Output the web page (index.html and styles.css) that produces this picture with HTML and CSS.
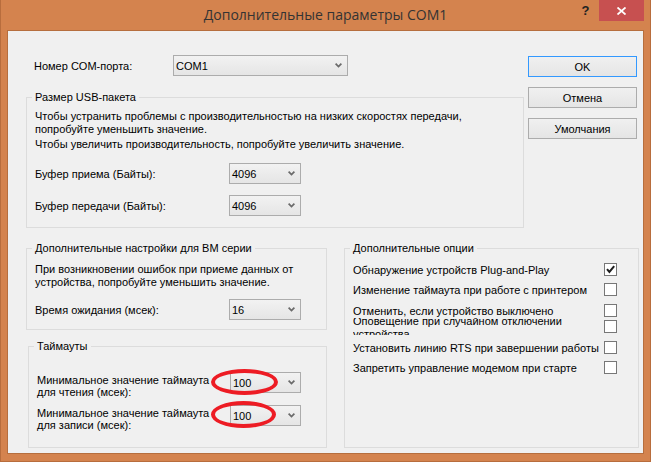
FILE: index.html
```html
<!DOCTYPE html>
<html lang="ru">
<head>
<meta charset="utf-8">
<title>Дополнительные параметры COM1</title>
<link rel="stylesheet" href="styles.css">
</head>
<body>
<div class="window">
  <div class="titlebar">
    <div class="title">Дополнительные параметры COM1</div>
    <div class="controls">
      <div class="help">?</div>
      <div class="close"><svg width="9" height="8" viewBox="0 0 9 8"><path d="M0.5 0.5 L8.5 7.5 M8.5 0.5 L0.5 7.5" stroke="#fff" stroke-width="1.8" fill="none"/></svg></div>
    </div>
  </div>
  <div class="client">
    <div class="top">
      <div class="main">
        <div class="com-row">
          <span>Номер COM-порта:</span>
          <div class="combo"><span>COM1</span><svg class="chev" width="7" height="5" viewBox="0 0 7 5"><polyline points="0.6,0.6 3.5,3.6 6.4,0.6" fill="none" stroke="#6a6a6a" stroke-width="1.7"/></svg></div>
        </div>
        <fieldset class="group usb">
          <legend>Размер USB-пакета</legend>
          <p class="note">Чтобы устранить проблемы с производительностью на низких скоростях передачи,<br>попробуйте уменьшить значение.</p>
          <p class="note second">Чтобы увеличить производительность, попробуйте увеличить значение.</p>
          <div class="field-row first">
            <span>Буфер приема (Байты):</span>
            <div class="combo"><span>4096</span><svg class="chev" width="7" height="5" viewBox="0 0 7 5"><polyline points="0.6,0.6 3.5,3.6 6.4,0.6" fill="none" stroke="#6a6a6a" stroke-width="1.7"/></svg></div>
          </div>
          <div class="field-row next">
            <span>Буфер передачи (Байты):</span>
            <div class="combo"><span>4096</span><svg class="chev" width="7" height="5" viewBox="0 0 7 5"><polyline points="0.6,0.6 3.5,3.6 6.4,0.6" fill="none" stroke="#6a6a6a" stroke-width="1.7"/></svg></div>
          </div>
        </fieldset>
      </div>
      <div class="buttons">
        <button class="btn default">OK</button>
        <button class="btn">Отмена</button>
        <button class="btn">Умолчания</button>
      </div>
    </div>
    <div class="bottom">
      <div class="left-col">
        <fieldset class="group bm">
          <legend>Дополнительные настройки для BM серии</legend>
          <p class="note">При возникновении ошибок при приеме данных от<br>устройства, попробуйте уменьшить значение.</p>
          <div class="field-row wait">
            <span>Время ожидания (мсек):</span>
            <div class="combo"><span>16</span><svg class="chev" width="7" height="5" viewBox="0 0 7 5"><polyline points="0.6,0.6 3.5,3.6 6.4,0.6" fill="none" stroke="#6a6a6a" stroke-width="1.7"/></svg></div>
          </div>
        </fieldset>
        <fieldset class="group timeouts">
          <legend>Таймауты</legend>
          <div class="t-row">
            <span class="t-label">Минимальное значение таймаута<br>для чтения (мсек):</span>
            <div class="combo"><span>100</span><svg class="chev" width="7" height="5" viewBox="0 0 7 5"><polyline points="0.6,0.6 3.5,3.6 6.4,0.6" fill="none" stroke="#6a6a6a" stroke-width="1.7"/></svg><span class="mark mark-a"></span></div>
          </div>
          <div class="t-row second">
            <span class="t-label">Минимальное значение таймаута<br>для записи (мсек):</span>
            <div class="combo"><span>100</span><svg class="chev" width="7" height="5" viewBox="0 0 7 5"><polyline points="0.6,0.6 3.5,3.6 6.4,0.6" fill="none" stroke="#6a6a6a" stroke-width="1.7"/></svg><span class="mark mark-b"></span></div>
          </div>
        </fieldset>
      </div>
      <fieldset class="group options">
        <legend>Дополнительные опции</legend>
        <div class="opt r1"><span>Обнаружение устройств Plug-and-Play</span><span class="check"><svg width="11" height="11" viewBox="0 0 11 11"><path d="M2 5.2 L4.4 8 L9.2 2.2" fill="none" stroke="#1e1e1e" stroke-width="2"/></svg></span></div>
        <div class="opt r2"><span>Изменение таймаута при работе с принтером</span><span class="check"></span></div>
        <div class="opt r3"><span>Отменить, если устройство выключено</span><span class="check"></span></div>
        <div class="opt r4"><span class="clip"><span>Оповещение при случайном отключении<br>устройства</span></span><span class="check"></span></div>
        <div class="opt r5"><span>Установить линию RTS при завершении работы</span><span class="check"></span></div>
        <div class="opt r6"><span>Запретить управление модемом при старте</span><span class="check"></span></div>
      </fieldset>
    </div>
  </div>
</div>
</body>
</html>
```
FILE: styles.css
```css
html, body {
  margin: 0;
  padding: 0;
}
body {
  width: 651px;
  height: 462px;
  overflow: hidden;
  font-family: "Liberation Sans", Arial, sans-serif;
  font-size: 11px;
  color: #000;
}
.window {
  box-sizing: border-box;
  width: 651px;
  height: 462px;
  background: #d4834e;
  border: 1px solid #b86d3d;
  border-top: none;
  display: flex;
  flex-direction: column;
}
.titlebar {
  flex: none;
  height: 30px;
  display: grid;
  grid-template-columns: 1fr auto 1fr;
}
.title {
  grid-column: 2;
  font-family: "Open Sans", "Noto Sans", sans-serif;
  font-size: 14px;
  line-height: 30px;
  color: #333;
  white-space: nowrap;
}
.controls {
  grid-column: 3;
  justify-self: end;
  display: flex;
  align-items: flex-start;
  margin-right: 6px;
}
.help {
  width: 27px;
  height: 21px;
  line-height: 22px;
  text-align: center;
  font-family: "Liberation Sans", Arial, sans-serif;
  font-weight: bold;
  font-size: 13px;
  color: #222;
}
.close {
  width: 45px;
  height: 21px;
  background: #c75050;
  display: flex;
  align-items: center;
  justify-content: center;
}
.client {
  flex: 1;
  box-sizing: border-box;
  margin: 0 6px 7px 6px;
  border: 1px solid #b66e3e;
  background: #f0f0f0;
  padding: 24px 4px 0 18px;
}
.top {
  display: flex;
  gap: 4px;
}
.main {
  width: 498px;
}
.com-row {
  display: grid;
  grid-template-columns: 139px 175px;
  align-items: center;
  padding-left: 8px;
}
.combo {
  position: relative;
  box-sizing: border-box;
  height: 21px;
  border: 1px solid #acacac;
  background: linear-gradient(#f2f2f2, #e5e5e5);
  display: flex;
  align-items: center;
  justify-content: space-between;
  padding: 0 5px 0 2px;
}
.chev {
  display: block;
}
.group {
  margin: 0;
  border: 1px solid #dcdcdc;
  min-width: 0;
  box-sizing: border-box;
}
.group legend {
  padding: 0 3px;
  margin-left: -3px;
  line-height: 13px;
}
.note {
  margin: 0;
  line-height: 13px;
}
.note.second {
  margin-top: 2px;
}
.usb {
  margin-top: 15px;
  padding: 6px 0 11px 8px;
}
.field-row {
  display: grid;
  grid-template-columns: 194px 72px;
  align-items: center;
}
.field-row.first {
  margin-top: 12px;
}
.field-row.next {
  margin-top: 11px;
}
.buttons {
  width: 109px;
  margin-top: 1px;
  display: flex;
  flex-direction: column;
  gap: 10px;
}
.btn {
  box-sizing: border-box;
  width: 109px;
  height: 21px;
  padding: 0;
  border: 1px solid #acacac;
  background: linear-gradient(#f0f0f0, #e5e5e5);
  font-family: "Liberation Sans", Arial, sans-serif;
  font-size: 11px;
  color: #000;
}
.btn.default {
  border-color: #3399ff;
}
.bottom {
  margin-top: 14px;
  display: flex;
  align-items: stretch;
}
.left-col {
  width: 301px;
  display: flex;
  flex-direction: column;
}
.bm {
  width: 301px;
  padding: 8px 0 9px 8px;
}
.field-row.wait {
  margin-top: 10px;
}
.timeouts {
  width: 299px;
  margin-top: 10px;
  margin-left: 2px;
  padding: 19px 0 16px 8px;
}
.t-row {
  display: grid;
  grid-template-columns: 193px 71px;
  align-items: start;
}
.t-row.second {
  margin-top: 7px;
}
.t-label {
  margin-top: 2px;
  line-height: 12px;
}
.mark {
  position: absolute;
  box-sizing: border-box;
  border: 4px solid #ed1c24;
  border-radius: 50%;
}
.mark-a {
  left: -20px;
  top: -4px;
  width: 67px;
  height: 26px;
}
.mark-b {
  left: -20px;
  top: -5px;
  width: 65px;
  height: 27px;
}
.options {
  width: 295px;
  margin-left: 17px;
  padding: 8px 21px 0 8px;
}
.opt {
  display: flex;
  align-items: center;
  justify-content: space-between;
}
.opt.r2 { margin-top: 7px; }
.opt.r3 { margin-top: 8px; }
.opt.r4 { margin-top: 1px; }
.opt.r5 { margin-top: 6px; }
.opt.r6 { margin-top: 7px; }
.clip {
  display: block;
  height: 17px;
  overflow: hidden;
  line-height: 13px;
}
.clip > span {
  display: block;
  margin-top: -3px;
}
.check {
  box-sizing: border-box;
  width: 13px;
  height: 13px;
  border: 1px solid #777;
  background: #fff;
  display: flex;
  align-items: center;
  justify-content: center;
  flex: none;
}
.check svg {
  display: block;
}
```
